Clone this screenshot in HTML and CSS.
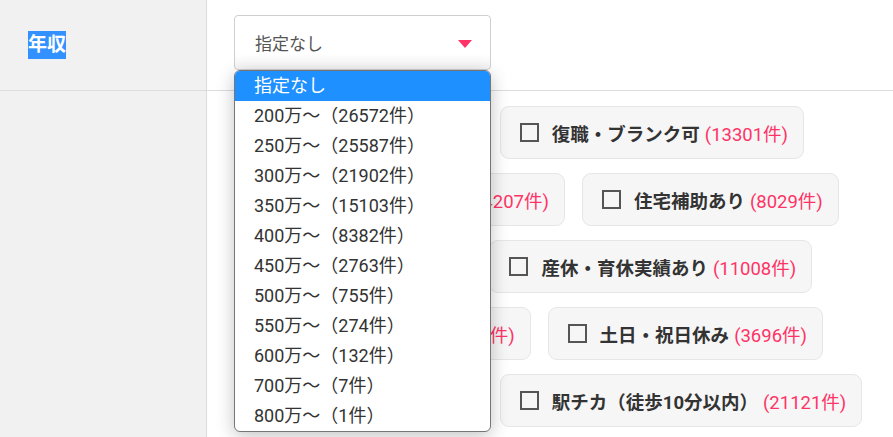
FILE: index.html
```html
<!DOCTYPE html>
<html lang="ja">
<head>
  <meta charset="UTF-8">
  <meta name="viewport" content="width=device-width, initial-scale=1.0">
  <title>求人検索 条件</title>
  <link rel="stylesheet" href="styles.css">
</head>
<body>

<div class="search-table">

  <!-- 年収 -->
  <div class="search-row">
    <div class="search-head"><span class="selected-text">年収</span></div>
    <div class="search-body">
      <div class="select-wrap">
        <div class="select-box">
          <span>指定なし</span>
          <span class="select-arrow"></span>
        </div>
        <ul class="select-list">
          <li class="active">指定なし</li>
          <li>200万～（26572件）</li>
          <li>250万～（25587件）</li>
          <li>300万～（21902件）</li>
          <li>350万～（15103件）</li>
          <li>400万～（8382件）</li>
          <li>450万～（2763件）</li>
          <li>500万～（755件）</li>
          <li>550万～（274件）</li>
          <li>600万～（132件）</li>
          <li>700万～（7件）</li>
          <li>800万～（1件）</li>
        </ul>
      </div>
    </div>
  </div>

  <!-- こだわり条件 -->
  <div class="search-row">
    <div class="search-head"></div>
    <div class="search-body">
      <div class="chip-list">
        <label class="chip"><span class="check"></span><span class="chip-name">未経験歓迎</span> <span class="count">(17452件)</span></label>
        <label class="chip"><span class="check"></span><span class="chip-name">復職・ブランク可</span> <span class="count">(13301件)</span></label>
        <label class="chip"><span class="check"></span><span class="chip-name">在宅勤務・リモート可</span> <span class="count">(4207件)</span></label>
        <label class="chip"><span class="check"></span><span class="chip-name">住宅補助あり</span> <span class="count">(8029件)</span></label>
        <label class="chip"><span class="check"></span><span class="chip-name">第二新卒可</span> <span class="count">(5432件)</span></label>
        <label class="chip"><span class="check"></span><span class="chip-name">産休・育休実績あり</span> <span class="count">(11008件)</span></label>
        <label class="chip"><span class="check"></span><span class="chip-name">残業月20時間以内</span> <span class="count">(6214件)</span></label>
        <label class="chip"><span class="check"></span><span class="chip-name">土日・祝日休み</span> <span class="count">(3696件)</span></label>
        <label class="chip"><span class="check"></span><span class="chip-name">交通費支給</span> <span class="count">(24410件)</span></label>
        <label class="chip"><span class="check"></span><span class="chip-name">駅チカ（徒歩10分以内）</span> <span class="count">(21121件)</span></label>
        <label class="chip"><span class="check"></span><span class="chip-name">車通勤可</span> <span class="count">(9876件)</span></label>
        <label class="chip"><span class="check"></span><span class="chip-name">学歴不問</span> <span class="count">(14823件)</span></label>
        <label class="chip"><span class="check"></span><span class="chip-name">賞与あり</span> <span class="count">(20155件)</span></label>
        <label class="chip"><span class="check"></span><span class="chip-name">服装自由</span> <span class="count">(3120件)</span></label>
      </div>
    </div>
  </div>

</div>

</body>
</html>
```

FILE: styles.css
```css
/* search conditions */

body {
  margin: 0;
  font-family: Roboto, "Noto Sans CJK JP", sans-serif;
  color: #333;
  background-color: #fff;
}

.search-row {
  display: grid;
  grid-template-columns: 207px 1fr;
  border-bottom: 1px solid #dcdcdc;
}

.search-head {
  background-color: #f1f1f1;
  border-right: 1px solid #dcdcdc;
  display: flex;
  align-items: center;
  padding-left: 28px;
  font-size: 19px;
  font-weight: 700;
  color: #333;
}

/* the label is shown as if selected with the mouse */
.selected-text {
  display: inline-block;
  background-color: #3390ff;
  color: #fff;
  line-height: 28px;
}

.search-body {
  padding: 15px 20px 20px 27px;
}

/* Select */
.select-wrap {
  position: relative;
  width: 257px;
}

.select-box {
  height: 53px;
  border: 1px solid #cfcfcf;
  border-radius: 4px;
  background: linear-gradient(#fff 70%, #f5f5f5);
  display: flex;
  align-items: center;
  justify-content: space-between;
  padding: 0 18px 0 20px;
  font-size: 17px;
  color: #555;
}

.select-arrow {
  width: 0;
  height: 0;
  border-left: 7px solid transparent;
  border-right: 7px solid transparent;
  border-top: 8px solid #ff3366;
  margin-top: 2px;
}

.select-list {
  position: absolute;
  top: 55px;
  left: 0;
  width: 255px;
  margin: 0;
  padding: 0;
  list-style: none;
  background-color: #fff;
  border: 1px solid #767676;
  border-radius: 6px;
  overflow: hidden;
  box-shadow: 0 4px 18px rgba(0, 0, 0, 0.24);
  z-index: 10;
}

.select-list li {
  height: 30px;
  line-height: 30px;
  padding-left: 19px;
  font-size: 18px;
  color: #333;
}

.select-list li.active {
  background-color: #1e90ff;
  color: #fff;
}

/* Chips */
.chip-list {
  display: flex;
  flex-wrap: wrap;
  gap: 14px 17px;
}

.chip {
  height: 51px;
  display: flex;
  align-items: center;
  padding: 0 15px 0 19px;
  background-color: #f6f6f6;
  border: 1px solid #e6e6e6;
  border-radius: 9px;
  font-size: 18.5px;
  white-space: nowrap;
}

.check {
  width: 15px;
  height: 15px;
  border: 2px solid #555;
  margin-right: 13px;
  flex-shrink: 0;
}

.chip-name {
  font-weight: 700;
  color: #333;
}

.count {
  color: #ff3366;
  margin-left: 5px;
}
```
